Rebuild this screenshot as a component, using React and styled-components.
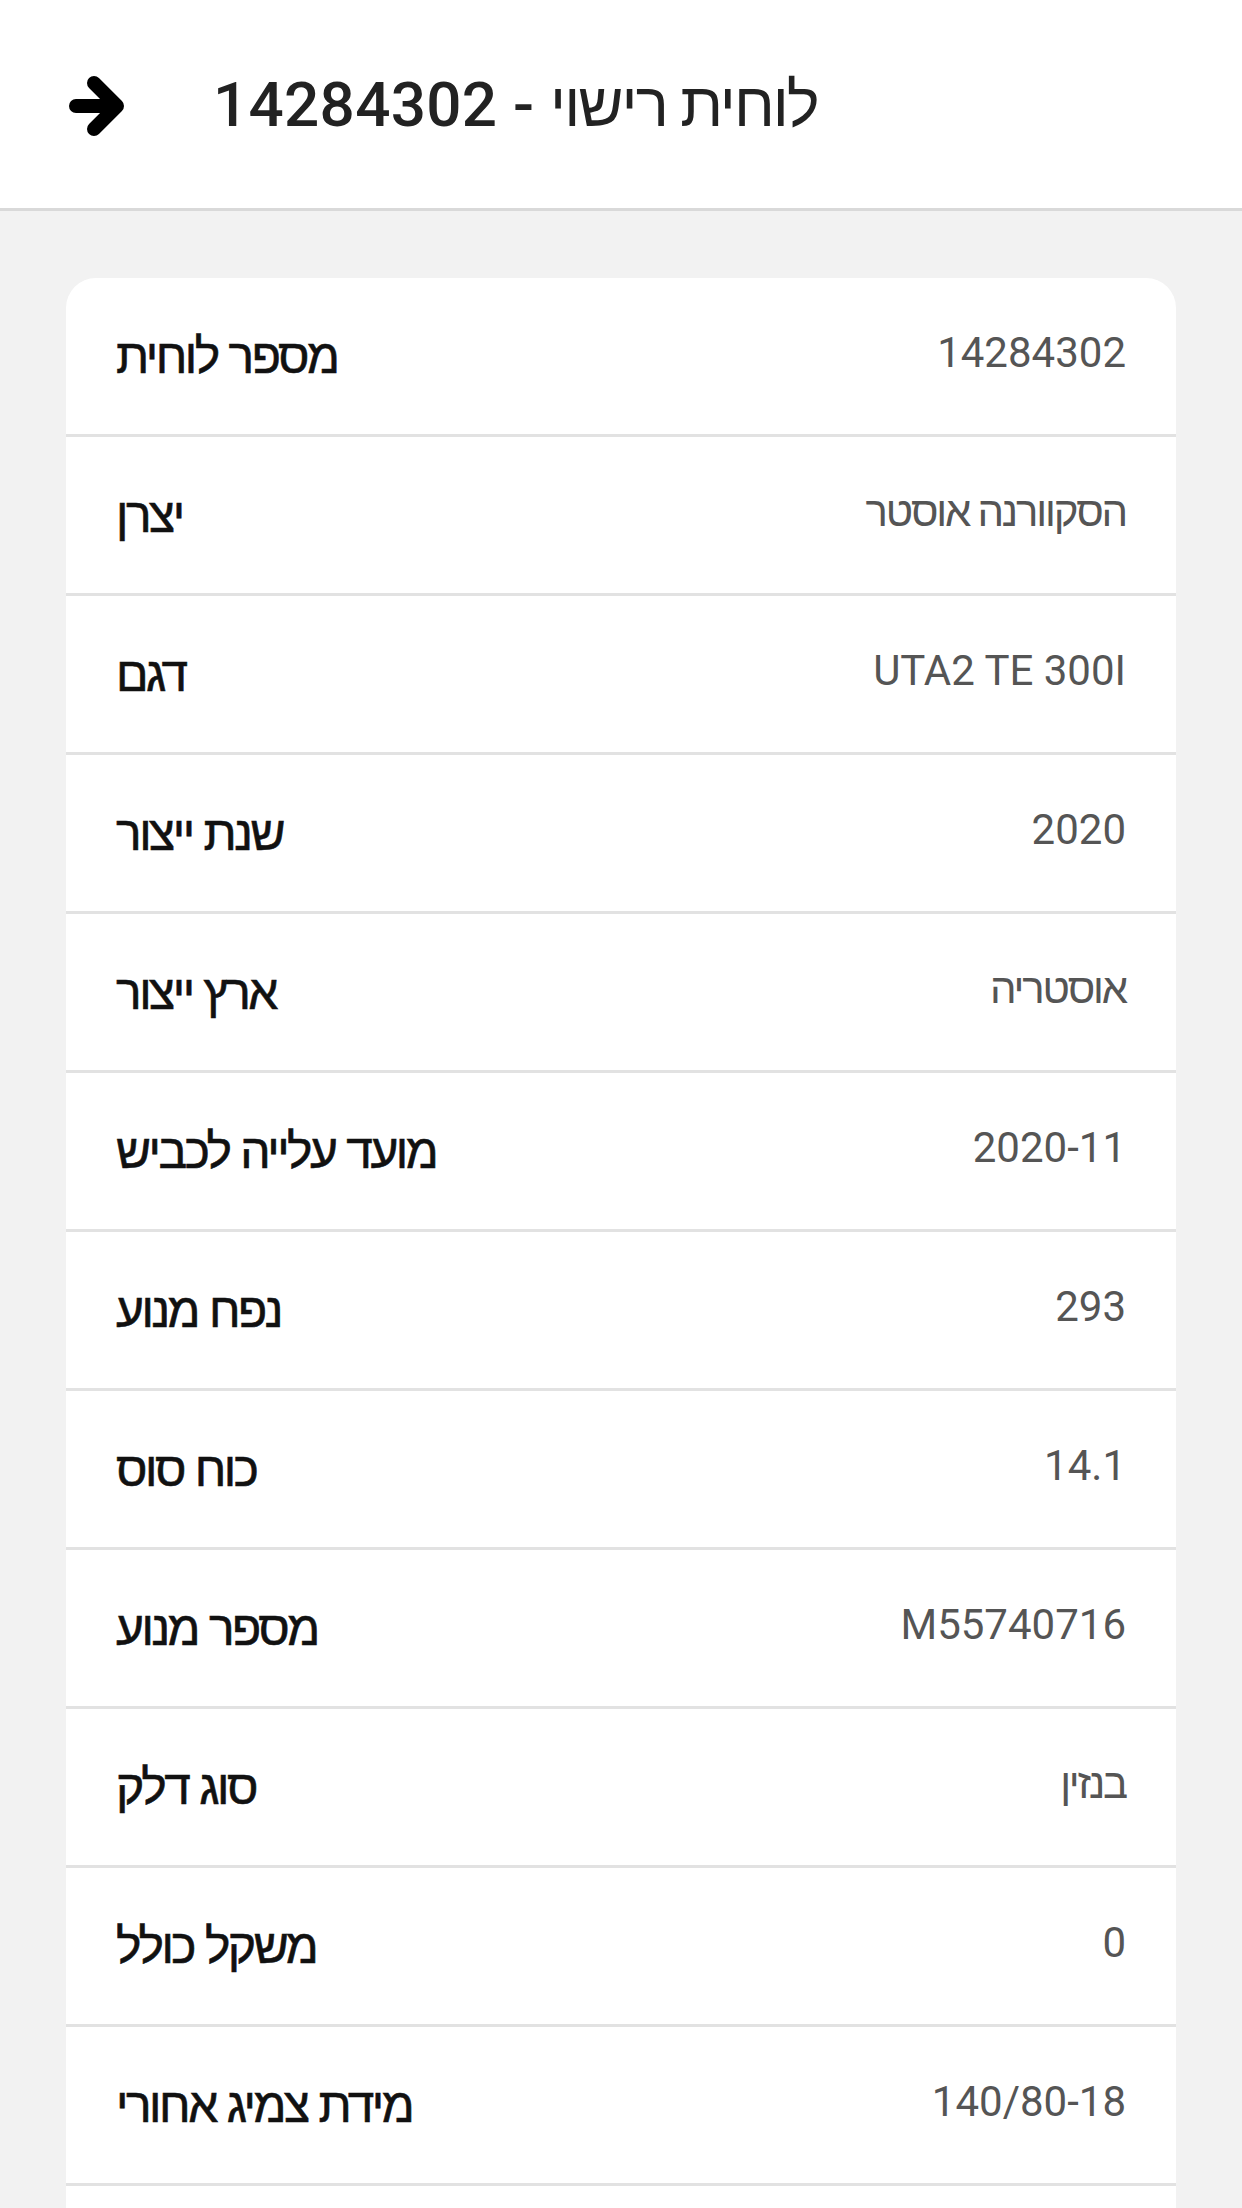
import React from 'react';
import styled, { createGlobalStyle } from 'styled-components';

const rows = [
  { label: 'מספר לוחית', value: '14284302' },
  { label: 'יצרן', value: 'הסקוורנה אוסטר' },
  { label: 'דגם', value: 'UTA2 TE 300I' },
  { label: 'שנת ייצור', value: '2020' },
  { label: 'ארץ ייצור', value: 'אוסטריה' },
  { label: 'מועד עלייה לכביש', value: '2020-11' },
  { label: 'נפח מנוע', value: '293' },
  { label: 'כוח סוס', value: '14.1' },
  { label: 'מספר מנוע', value: 'M55740716' },
  { label: 'סוג דלק', value: 'בנזין' },
  { label: 'משקל כולל', value: '0' },
  { label: 'מידת צמיג אחורי', value: '140/80-18' },
  { label: 'מידת צמיג קדמי', value: '90/90-21' },
];

const isHebrew = (text) => /[\u0590-\u05FF]/.test(text);

const BackArrow = () => (
  <svg width="70" height="74" viewBox="0 0 70 74" fill="none">
    <path
      d="M14 37H55M32 14L55 37L32 60"
      stroke="#000"
      strokeWidth="14"
      strokeLinecap="round"
      strokeLinejoin="round"
    />
  </svg>
);

const App = () => {
  return (
    <>
      <GlobalStyle />
      <Page>
        <Header>
          <BackButton aria-label="חזרה">
            <BackArrow />
          </BackButton>
          <Title dir="rtl">
            <TitleHebrew>לוחית רישוי</TitleHebrew> - 14284302
          </Title>
        </Header>

        <Content>
          <Card>
            {rows.map((row) => (
              <Row key={row.label}>
                <Label dir="rtl">{row.label}</Label>
                <Value $hebrew={isHebrew(row.value)}>{row.value}</Value>
              </Row>
            ))}
          </Card>
        </Content>
      </Page>
    </>
  );
};

const GlobalStyle = createGlobalStyle`
  * {
    box-sizing: border-box;
  }

  body {
    margin: 0;
    background-color: #f2f2f2;
    font-family: Roboto, "Liberation Sans", "Noto Sans", sans-serif;
  }
`;

const Page = styled.div`
  min-height: 100vh;
  background-color: #f2f2f2;
`;

const Header = styled.header`
  display: flex;
  align-items: center;
  height: 211px;
  padding-left: 62px;
  background-color: #fff;
  border-bottom: 3px solid #d9d9d9;
`;

const BackButton = styled.button`
  display: flex;
  align-items: center;
  justify-content: center;
  padding: 0;
  margin: 4px 81px 0 0;
  border: none;
  background: none;
  cursor: pointer;
`;

const Title = styled.h1`
  margin: 0;
  font-family: Roboto, "Liberation Sans", sans-serif;
  font-size: 62px;
  font-weight: 500;
  color: #222;
  letter-spacing: 0.3px;
`;

const TitleHebrew = styled.span`
  letter-spacing: -2px;
`;

const Content = styled.main`
  padding: 67px 66px 66px;
`;

const Card = styled.section`
  background-color: #fff;
  border-radius: 30px;
  overflow: hidden;
`;

const Row = styled.div`
  display: flex;
  align-items: center;
  justify-content: space-between;
  height: 159px;
  padding: 0 50px;
  border-bottom: 3px solid #e2e2e2;

  &:last-child {
    border-bottom: none;
  }
`;

const Label = styled.span`
  font-family: "Liberation Sans", Arial, sans-serif;
  font-size: 48px;
  color: #111;
  letter-spacing: -2.5px;
  -webkit-text-stroke: 0.6px #111;
`;

const Value = styled.span`
  margin-bottom: 8px;
  font-family: Roboto, "Liberation Sans", sans-serif;
  font-size: 42px;
  color: #555;
  direction: ltr;
  letter-spacing: ${({ $hebrew }) => ($hebrew ? '-2.2px' : 'normal')};
`;

export default App;
